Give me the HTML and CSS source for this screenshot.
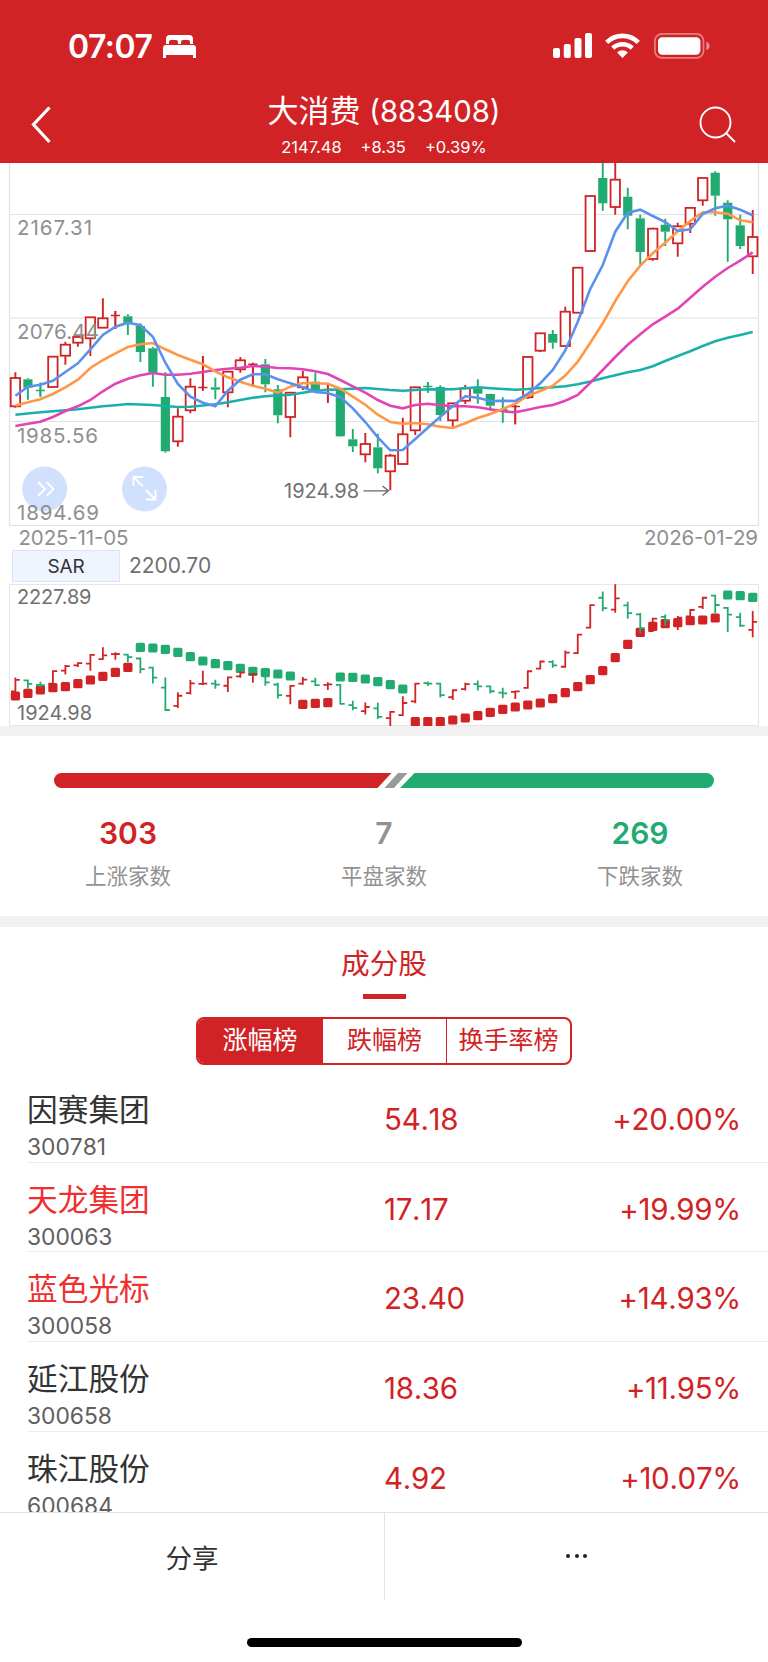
FILE: index.html
```html
<!DOCTYPE html>
<html lang="zh-CN">
<head>
  <meta charset="UTF-8">
  <title>大消费 (883408)</title>
  <meta name="viewport" content="width=device-width, initial-scale=1.0">
  <link rel="stylesheet" href="styles.css">
</head>
<body>
  <header class="header">
    <div class="status-bar">
      <span class="clock">07:07</span>
      <svg class="bed" width="33" height="24" viewBox="0 0 33 24" fill="#fff">
        <path d="M3 9V4a4 4 0 0 1 4-4h19a4 4 0 0 1 4 4v5h-3V7a2 2 0 0 0-2-2h-5a2 2 0 0 0-2 2v2h-3V7a2 2 0 0 0-2-2H8a2 2 0 0 0-2 2v2z"/>
        <path d="M0 23V13a3 3 0 0 1 3-3h27a3 3 0 0 1 3 3v10h-3v-3H3v3z"/>
      </svg>
      <svg class="signal" width="39" height="25" viewBox="0 0 39 25" fill="#fff">
        <rect x="0" y="15" width="7" height="10" rx="2"/>
        <rect x="10.8" y="11" width="7" height="14" rx="2"/>
        <rect x="21.5" y="5" width="7" height="20" rx="2"/>
        <rect x="32" y="0" width="7" height="25" rx="2"/>
      </svg>
      <svg class="wifi" width="35" height="25" viewBox="0 0 35 25">
        <g fill="none" stroke="#fff" stroke-width="4.6">
          <path d="M1.7 9.3a22.6 22.6 0 0 1 31.6 0"/>
          <path d="M7.8 15.2a14 14 0 0 1 19.4 0"/>
        </g>
        <path d="M17.5 25l-5.4-5.5a7.8 7.8 0 0 1 10.8 0z" fill="#fff"/>
      </svg>
      <svg class="battery" width="57" height="26" viewBox="0 0 57 26">
        <rect x="0.9" y="0.9" width="48.6" height="24" rx="7" fill="none" stroke="#fff" stroke-opacity=".42" stroke-width="1.7"/>
        <rect x="4" y="4.3" width="42.4" height="17.4" rx="4.2" fill="#fff"/>
        <path d="M52.4 8.8Q55.6 10 55.6 12.9T52.4 17z" fill="#fff" fill-opacity=".5"/>
      </svg>
    </div>
    <div class="nav">
      <svg class="back" width="20" height="38" viewBox="0 0 20 38">
        <path d="M18.5 1.5L2.5 18.5l16 17.500" fill="none" stroke="#fff" stroke-width="3.2"/>
      </svg>
      <div class="nav-title">
        <h1>大消费 <span>(883408)</span></h1>
        <p><span>2147.48</span><span>+8.35</span><span>+0.39%</span></p>
      </div>
      <svg class="search" width="38" height="38" viewBox="0 0 38 38" fill="none" stroke="#fff" stroke-width="1.9">
        <circle cx="16.5" cy="16.5" r="15"/>
        <path d="M27 27l9 9"/>
      </svg>
    </div>
  </header>

  <section class="chart">
    <svg id="kline" width="768" height="387" viewBox="0 163 768 387"></svg>
    <div class="indicator">
      <button class="indicator-name">SAR</button>
      <span class="indicator-value">2200.70</span>
    </div>
    <svg id="sar" width="768" height="143" viewBox="0 583 768 143"></svg>
  </section>

  <section class="breadth">
    <svg class="breadth-bar" width="660" height="15" viewBox="0 0 660 15">
      <path d="M7.5 0H337.5L323.5 15H7.5a7.5 7.5 0 0 1 0-15z" fill="#d12325"/>
      <path d="M344 0h9.5L340 15h-9.5z" fill="#999"/>
      <path d="M360.5 0h292a7.5 7.5 0 0 1 0 15H346z" fill="#22ab70"/>
    </svg>
    <div class="breadth-row">
      <div class="breadth-item up"><b>303</b><span>上涨家数</span></div>
      <div class="breadth-item flat"><b>7</b><span>平盘家数</span></div>
      <div class="breadth-item down"><b>269</b><span>下跌家数</span></div>
    </div>
  </section>

  <section class="stocks">
    <h2>成分股</h2>
    <div class="segment">
      <button class="active">涨幅榜</button>
      <button>跌幅榜</button>
      <button>换手率榜</button>
    </div>
    <ul class="stock-list">
      <li><div class="stock"><strong>因赛集团</strong><small>300781</small></div><span class="price">54.18</span><span class="percent">+20.00%</span></li>
      <li><div class="stock hot"><strong>天龙集团</strong><small>300063</small></div><span class="price">17.17</span><span class="percent">+19.99%</span></li>
      <li><div class="stock hot"><strong>蓝色光标</strong><small>300058</small></div><span class="price">23.40</span><span class="percent">+14.93%</span></li>
      <li><div class="stock"><strong>延江股份</strong><small>300658</small></div><span class="price">18.36</span><span class="percent">+11.95%</span></li>
      <li><div class="stock"><strong>珠江股份</strong><small>600684</small></div><span class="price">4.92</span><span class="percent">+10.07%</span></li>
    </ul>
  </section>

  <footer class="toolbar">
    <button>分享</button>
    <button class="more" aria-label="更多"><i></i><i></i><i></i></button>
  </footer>
  <div class="home-indicator"></div>

  <script src="chart.js"></script>
</body>
</html>
```
FILE: styles.css
```css
* {
  box-sizing: border-box;
}

body {
  margin: 0;
  width: 768px;
  height: 1662px;
  display: flex;
  flex-direction: column;
  overflow: hidden;
  background: #fff;
  color: #333;
  font-family: Inter, "Noto Sans CJK SC", sans-serif;
}

h1, h2, p, ul {
  margin: 0;
  padding: 0;
  font-weight: 400;
}

button {
  margin: 0;
  padding: 0;
  border: none;
  background: none;
  color: inherit;
  font: inherit;
}

svg {
  display: block;
  flex: none;
}

/* header */
.header {
  height: 163px;
  flex: none;
  background: #d12325;
  color: #fff;
}

.status-bar {
  height: 90px;
  display: flex;
  align-items: flex-start;
  padding: 33px 57px 0 68px;
}

.clock {
  width: 95px;
  font-size: 32px;
  font-weight: 600;
  line-height: 27px;
  letter-spacing: -0.5px;
}

.bed {
  margin-top: 2px;
}

.signal {
  margin-left: auto;
}

.wifi {
  margin-left: 13px;
}

.battery {
  margin-left: 14px;
}

.nav {
  display: grid;
  grid-template-columns: 1fr auto 1fr;
  padding: 0 31px;
}

.back, .search {
  margin-top: 16px;
}

.search {
  justify-self: end;
}

.nav-title {
  text-align: center;
}

.nav-title h1 {
  font-size: 31px;
  line-height: 42px;
}

.nav-title h1 span {
  font-size: 29.3px;
}

.nav-title p {
  display: flex;
  justify-content: center;
  gap: 19px;
  font-size: 16.5px;
  line-height: 20px;
  margin-top: 4px;
}

/* charts */
.chart {
  flex: none;
}

.chart text {
  font-size: 20.5px;
  fill: #8f8f8f;
}

.chart .dark {
  font-size: 20px;
  fill: #707070;
}

.indicator {
  height: 33px;
  display: flex;
  padding: 0 12px;
  gap: 9px;
  line-height: 31px;
}

.indicator-name {
  width: 108px;
  height: 32px;
  border: 1px solid #d8e4fb;
  background: #eff4fe;
  color: #333;
  font-size: 19px;
  letter-spacing: -0.2px;
}

.indicator-value {
  font-size: 21px;
  color: #707070;
}

/* up / flat / down */
.breadth {
  height: 201px;
  flex: none;
  border-top: 10px solid #f1f1f1;
  border-bottom: 11px solid #f1f1f1;
  padding-top: 37px;
}

.breadth-bar {
  margin: 0 auto;
}

.breadth-row {
  display: grid;
  grid-template-columns: repeat(3, 1fr);
  margin-top: 26px;
}

.breadth-item {
  display: flex;
  flex-direction: column;
  align-items: center;
}

.breadth-item b {
  font-size: 30px;
  font-weight: 600;
  line-height: 38px;
}

.breadth-item span {
  margin-top: 8px;
  color: #929292;
  font-size: 21.5px;
  line-height: 32px;
}

.up b { color: #d12325; }
.flat b { color: #929292; }
.down b { color: #22ab70; }

/* constituents */
.stocks {
  height: 585px;
  flex: none;
  overflow: hidden;
  color: #d12325;
}

.stocks h2 {
  width: 100px;
  margin: 0 auto;
  padding-top: 16px;
  text-align: center;
  font-size: 28.7px;
  line-height: 42px;
}

.stocks h2::after {
  content: '';
  display: block;
  width: 43px;
  height: 5px;
  margin: 9px auto 0;
  background: #d12325;
}

.segment {
  width: 376px;
  height: 48px;
  margin: 18px auto 8px;
  display: grid;
  grid-template-columns: repeat(3, 1fr);
  border: 2px solid #d12325;
  border-radius: 8px;
  overflow: hidden;
  font-size: 25px;
  line-height: 42px;
}

.segment button {
  padding-bottom: 2px;
}

.segment button + button {
  border-left: 1.5px solid #d12325;
}

.segment .active {
  background: #d12325;
  color: #fff;
}

.stock-list {
  list-style: none;
  padding-left: 27px;
}

.stock-list li {
  height: 89.7px;
  display: grid;
  grid-template-columns: 357px 1fr auto;
  padding-right: 27px;
  border-bottom: 1px solid #ededed;
  font-size: 29.5px;
  line-height: 36px;
  font-kerning: none;
}

.stock {
  display: flex;
  flex-direction: column;
  color: #333;
}

.stock strong {
  margin-top: 17px;
  font-size: 30.7px;
  font-weight: 400;
  line-height: 40px;
}

.stock small {
  margin-top: 3px;
  font-size: 22.8px;
  line-height: 28px;
  color: #606060;
}

.stock.hot strong {
  color: #ee3030;
}

.price, .percent {
  margin-top: 28px;
  letter-spacing: -0.3px;
}

/* bottom toolbar */
.toolbar {
  height: 88px;
  flex: none;
  display: grid;
  grid-template-columns: 1fr 1fr;
  border-top: 1px solid #e2e2e2;
  background: #fff;
  font-size: 26.5px;
}

.toolbar button {
  padding-bottom: 1px;
}

.more {
  display: flex;
  align-items: center;
  justify-content: center;
  gap: 4.2px;
  border-left: 1px solid #e2e2e2;
}

.more i {
  width: 4px;
  height: 4px;
  border-radius: 50%;
  background: #222;
}

.home-indicator {
  width: 275px;
  height: 9px;
  margin: 38px auto 0;
  border-radius: 5px;
  background: #000;
}
```
FILE: chart.js
```js
const UP = '#d12325';
const DOWN = '#22ab70';
const kline = document.getElementById('kline');
const sar = document.getElementById('sar');

const x = (i) => 15.4 + i * 12.497;
// main chart y -> lower panel y
const y2 = (y) => 726 - (490.3 - y) * 0.4107;

// u = up, d = down: high, body top, body bottom, low
const candles = [
  ['u', 372.3, 378, 406.3, 407.7], ['d', 378.3, 379.3, 387.7, 399.7], ['d', 382.7, 390, 391, 396.7],
  ['u', 356.3, 356.7, 387, 387.3], ['u', 341.7, 344.7, 355.7, 364.7], ['u', 335, 337, 342.7, 346.7],
  ['u', 317, 317.3, 338.3, 356], ['u', 298.3, 318.3, 327.7, 327.7], ['u', 311, 315, 315.5, 329],
  ['d', 314.3, 316.3, 322.7, 335], ['d', 323.3, 326, 352, 362], ['d', 347, 348.3, 372.7, 386.7],
  ['d', 372.3, 397, 451.3, 452.7], ['u', 408.3, 416.7, 441.3, 446.7], ['u', 378.3, 386.7, 410.3, 413.3],
  ['u', 356, 387, 387.7, 390.7], ['d', 377.7, 387.3, 389.7, 399.3], ['u', 371.3, 371.7, 392.3, 407.3],
  ['u', 357, 360.3, 369.3, 372.7], ['u', 362.7, 363.7, 364.7, 385], ['d', 359, 364.3, 384.3, 392.3],
  ['d', 385, 389.3, 415.3, 423.3], ['u', 392.3, 392.7, 417, 437.3], ['u', 370.7, 377.3, 387.3, 390],
  ['d', 372.7, 381.7, 391, 391.3], ['u', 384, 389, 390, 402.7], ['d', 388.7, 390, 436.3, 436.7],
  ['d', 429, 439.3, 446.3, 452], ['u', 433, 444, 454.3, 462.3], ['d', 433.7, 447.3, 468.3, 473.3],
  ['u', 453.7, 455.7, 471.3, 490.3], ['u', 417.7, 434.3, 464, 464.7], ['u', 386.7, 387.3, 430.3, 435],
  ['d', 382, 386, 387, 392.7], ['d', 385.3, 387, 415, 421], ['u', 402.7, 403.3, 420.3, 426.7],
  ['u', 385, 388.3, 400.7, 404], ['d', 379.3, 388.3, 393.7, 403.7], ['d', 393.7, 394, 405.7, 411],
  ['d', 397.3, 409, 411, 422.7], ['u', 405, 406, 407, 424.3], ['u', 356.3, 357, 397.3, 399],
  ['u', 333, 333.3, 350.7, 352], ['d', 330, 334, 342.7, 348.7], ['u', 306.7, 311.7, 346, 346.7],
  ['u', 267.5, 267.7, 312.7, 313], ['u', 195.8, 196, 251, 251.3], ['d', 163, 178, 203.3, 210.7],
  ['u', 145.3, 179.7, 207, 214.7], ['d', 187.7, 196.7, 215.7, 229.3], ['d', 215, 218.3, 252, 264.7],
  ['u', 227.7, 228.7, 259, 260.7], ['d', 218.7, 224.7, 231.7, 246], ['u', 222.7, 226.3, 243.3, 256.7],
  ['u', 207.7, 207.9, 223.7, 233], ['u', 177.8, 178, 200.3, 205.7], ['d', 171.3, 172.7, 195.7, 215.7],
  ['d', 200.3, 202.7, 219.3, 261.7], ['d', 214.7, 225.3, 246, 249], ['u', 210, 237, 256.3, 274]
];

const ma5 = [395.7, 386.7, 384.7, 380.7, 372, 363.3, 349.3, 335, 326.7, 322.7, 325.3, 336.7, 362.7, 384, 396.7,
  402.7, 406.3, 390.7, 379.7, 374.3, 374.3, 379.3, 383.3, 387.3, 392, 393.3, 397, 408.3, 422, 437.3,
  450.3, 450, 439, 427.7, 416.7, 406, 396.3, 397.7, 401, 400.7, 401, 394, 383.3, 370, 350.5,
  321.7, 289, 265, 231.7, 212.7, 209.7, 216, 222, 231, 229.3, 214, 208.3, 205.7, 209.7, 215.3];
const ma10 = [405.7, 402.3, 399.3, 394, 387.3, 379.7, 368, 360, 353.3, 347, 344.3, 343, 349.3, 355, 359.7,
  364.3, 371.3, 377.3, 381.7, 385.7, 388.7, 392.7, 386.7, 383, 383.3, 383.7, 388.7, 396.7, 404.7, 414.7,
  422, 423.7, 423, 424.3, 426.7, 428, 423.3, 418, 414, 409, 403.7, 396, 391, 385.7, 375.5,
  361.7, 342.7, 323.3, 301, 281.3, 265.7, 253.3, 242.7, 231.3, 221, 212.3, 212.3, 213.7, 220.3, 222.3];
const ma20 = [426, 423.7, 421.7, 417, 411, 406.3, 400, 391.3, 383.7, 378.7, 375.3, 373, 374.7, 374.7, 373.7,
  372, 370, 368.7, 367.7, 366, 366.7, 368, 368.3, 369.3, 371.3, 374, 380, 386.3, 392.7, 400,
  405.7, 408.3, 405, 403.7, 405.3, 406.3, 406.3, 407.3, 409.3, 411.3, 412.3, 409.7, 407, 405, 400.7,
  395, 382.7, 370, 357, 344.7, 334.3, 324.3, 316.7, 308.7, 297.7, 286.7, 276.7, 268, 260.7, 252.3];
const ma60 = [414.7, 413.5, 412.3, 411.3, 410.3, 409.3, 407.8, 406.3, 405.2, 404, 404.5, 405, 406, 407, 406.7,
  405.5, 404.3, 402.3, 400, 397.7, 396.3, 395.4, 394.7, 392.7, 390.7, 390, 389.3, 388.7, 388, 389,
  390, 390.7, 390, 389.3, 389.4, 389.3, 388.3, 387.3, 388.2, 389, 389.7, 389, 388, 387.2, 386.3,
  384.3, 381.5, 378.3, 375.2, 372.3, 370, 366.3, 361, 356, 351.2, 346, 341.3, 337.7, 334.9, 332];

const dots = [696, 693.3, 690, 687.7, 686.7, 683.7, 680, 676.3, 672.3, 667.3, 647.3, 648, 649.3, 652.3, 656.7,
  661, 663.7, 665.7, 668.3, 671.3, 672.7, 674, 676, 704.3, 703.3, 702.7, 677, 677.3, 679, 681.7,
  684.7, 689, 721.7, 721.7, 721.7, 720, 718, 715.7, 712.3, 709.3, 707, 705, 703, 698.7, 692.7,
  686.7, 679.7, 670.7, 657.7, 644.3, 632.3, 626.3, 623.7, 622.7, 620.7, 620, 618, 595, 595.7, 597.3];
const isDownDot = (i) => (i > 9 && i < 23) || (i > 25 && i < 32) || i > 56;

const path = (d, color, w) => `<path d="${d}" fill="none" stroke="${color}" stroke-width="${w}"/>`;
const line = (ys, color) => path('M' + ys.map((y, i) => `${x(i)} ${y}`).join('L'), color, 2.6);
const label = (text, lx, y, w, cls = '') =>
  `<text class="${cls}" x="${lx}" y="${y}" textLength="${w}">${text}</text>`;

// k-line panel
let out = path('M9.5 163V525.5H758.5V163M9.5 214.5H758.5M9.5 318H758.5M9.5 421.5H758.5', '#e2e2e2', 1.2);

candles.forEach(([type, high, top, bottom, low], i) => {
  const color = type === 'u' ? UP : DOWN;
  const cx = x(i);
  out += path(`M${cx} ${high}V${top}M${cx} ${bottom}V${low}`, color, 1.9);
  if (bottom - top < 1.8) {
    out += path(`M${cx - 4.6} ${top + 0.5}h9.2M${cx} ${high}V${low}`, color, 1.6);
  } else if (type === 'u') {
    out += `<rect x="${cx - 4.7}" y="${top}" width="9.4" height="${bottom - top}" fill="#fff" stroke="${color}" stroke-width="1.8"/>`;
  } else {
    out += `<rect x="${cx - 4.6}" y="${top}" width="9.2" height="${bottom - top}" fill="${color}"/>`;
  }
});

out += line(ma60, '#19b0ab') + line(ma20, '#e144b4') + line(ma10, '#ff9747') + line(ma5, '#5a91ef');

// round buttons
out += '<g fill="#cfdefd" fill-opacity=".95"><circle cx="44.7" cy="489" r="22.5"/><circle cx="144.5" cy="489" r="22.5"/></g>';
out += path('M38 482l7 7-7 7M46.5 482l7 7-7 7', '#fff', 1.8);
out += path('M143 486.5L133.5 477M133.5 486V477H143M146 490L155.5 499.5M146 499.5H155.5V490', '#fff', 1.8);

out += label('2167.31', 17, 235.3, 75) + label('2076.44', 17, 339, 82);
out += label('1985.56', 17, 442.7, 81) + label('1894.69', 17, 520.3, 82);
out += label('2025-11-05', 18.5, 544.6, 110) + label('2026-01-29', 644, 544.6, 114);
out += label('1924.98', 284, 497.8, 75, 'dark');
out += path('M363.5 490.8H388M382.5 486l6 4.8-6 4.8', '#666', 1.3);
kline.innerHTML = out;

// SAR panel
out = path('M9.5 726V584.5H758.5V726M9.5 725.5H758.5', '#e6e6e6', 1.1);
dots.forEach((y, i) => {
  out += `<rect x="${x(i) - 4.6}" y="${y - 4.6}" width="9.2" height="9.2" rx="1.5" fill="${isDownDot(i) ? DOWN : UP}"/>`;
});
candles.forEach(([type, high, top, bottom, low], i) => {
  const open = y2(type === 'u' ? bottom : top);
  const close = y2(type === 'u' ? top : bottom);
  const cx = x(i);
  out += path(`M${cx} ${y2(high)}V${y2(low)}M${cx - 4.4} ${open}H${cx + 0.8}M${cx - 0.8} ${close}H${cx + 4.4}`,
    type === 'u' ? UP : DOWN, 1.8);
});
out += label('2227.89', 17, 604, 74.5, 'dark') + label('1924.98', 17, 719.7, 75, 'dark');
sar.innerHTML = out;
```
